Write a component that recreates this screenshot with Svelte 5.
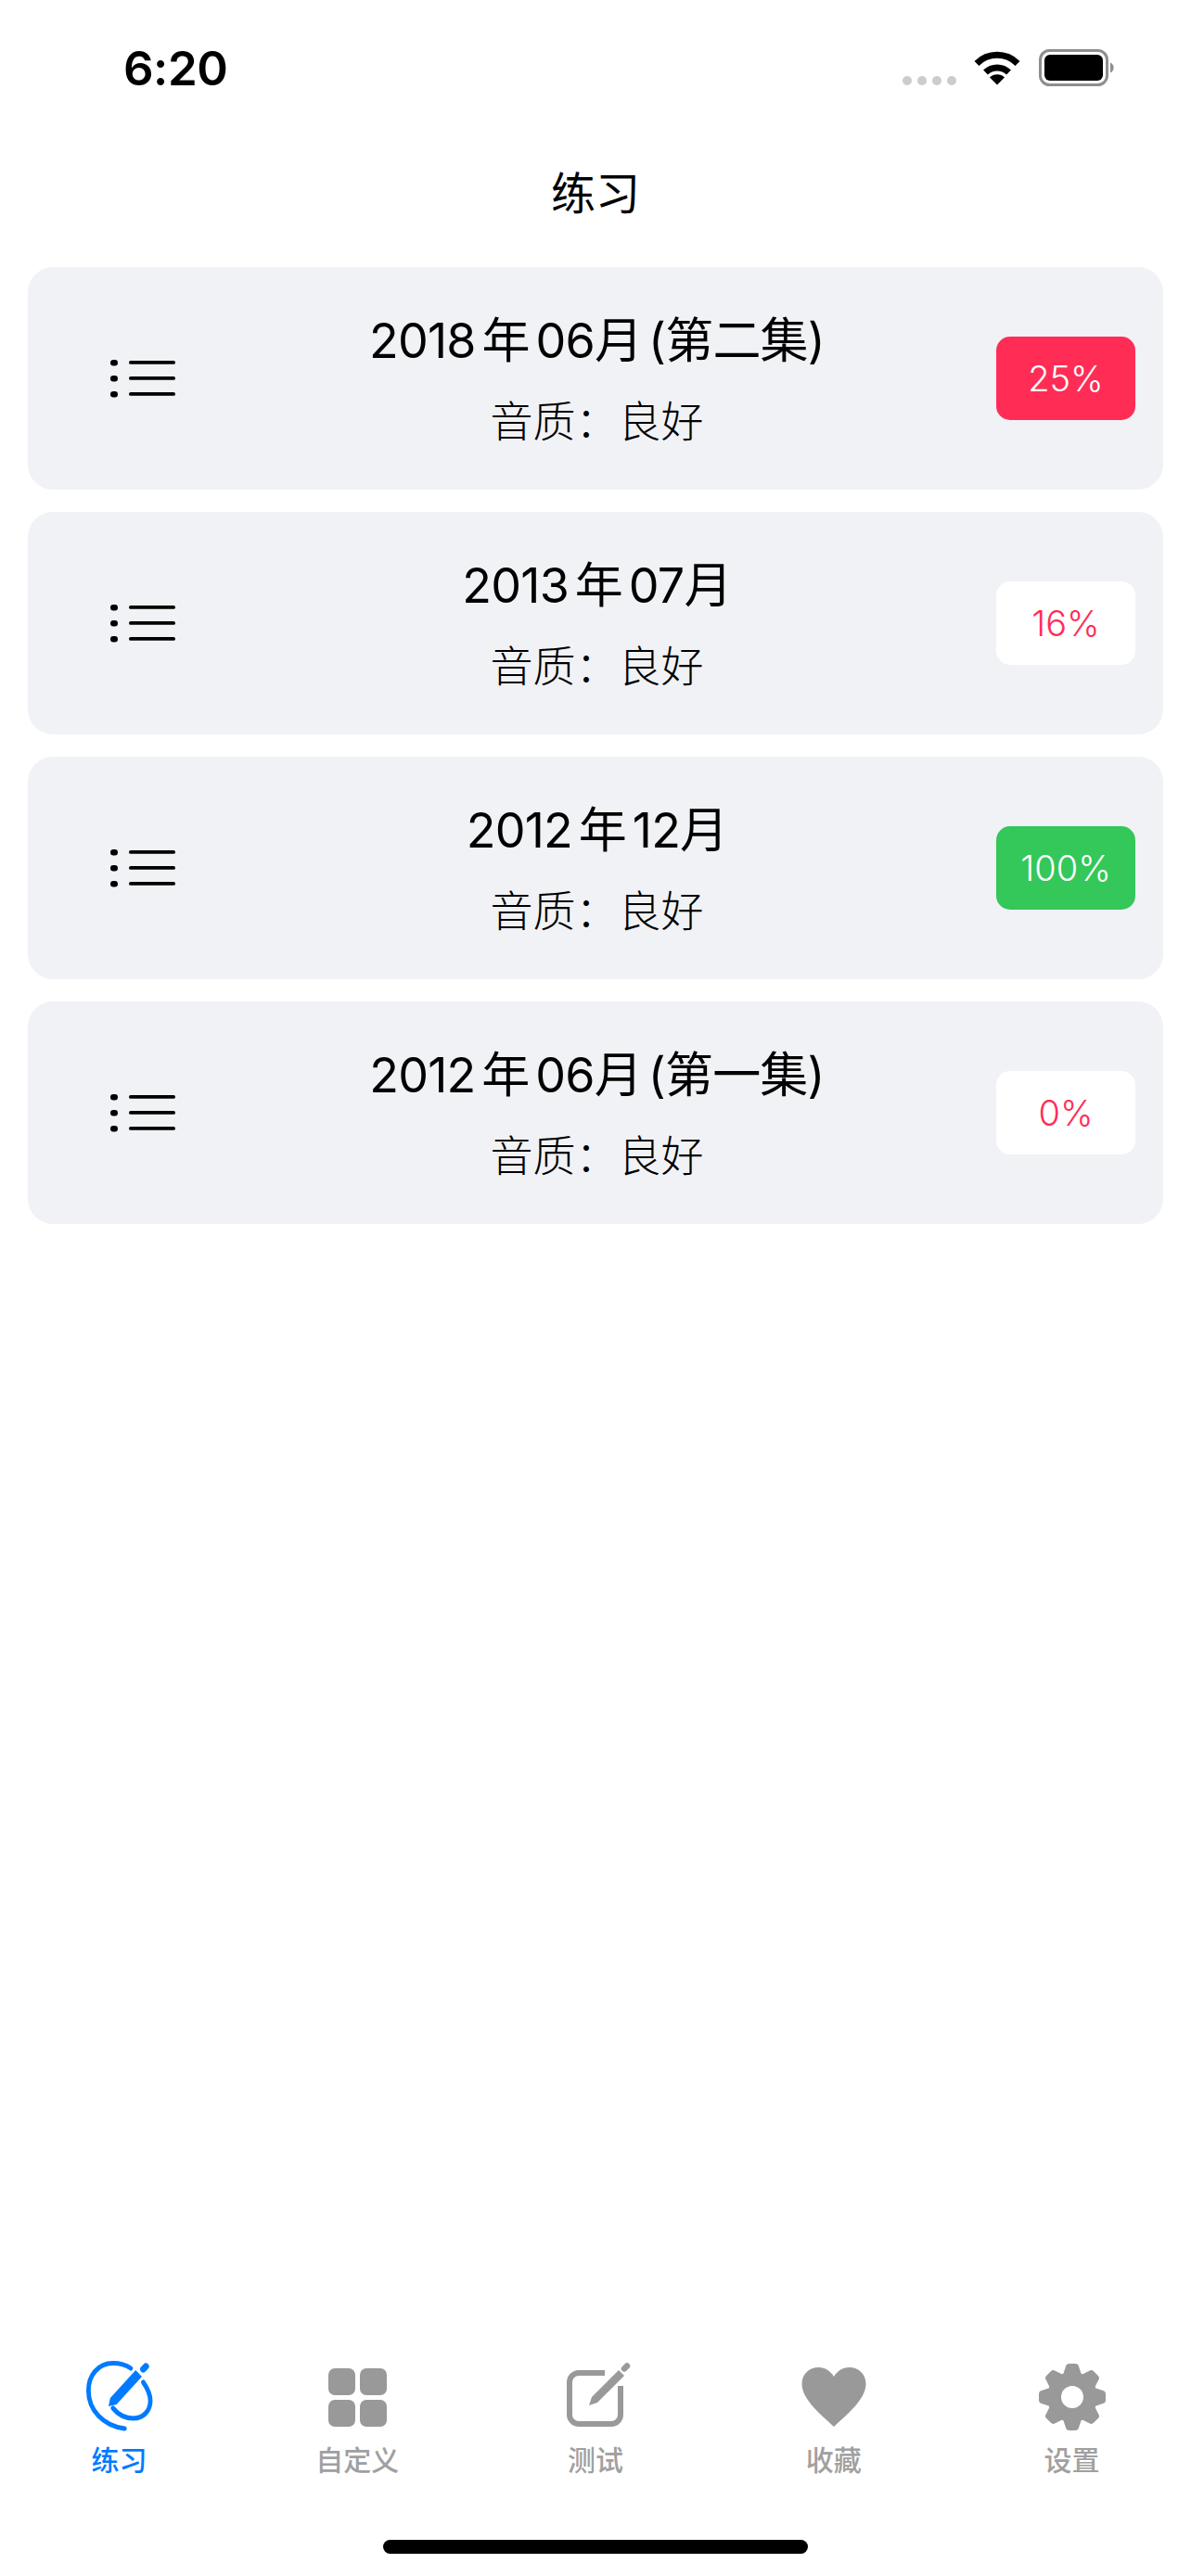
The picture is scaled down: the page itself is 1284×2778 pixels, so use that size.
<script>
  const cards = [
    { title: '2018 年 06月 (第二集)', pct: '25%', kind: 'red' },
    { title: '2013 年 07月', pct: '16%', kind: 'plain' },
    { title: '2012 年 12月', pct: '100%', kind: 'green' },
    { title: '2012 年 06月 (第一集)', pct: '0%', kind: 'plain' }
  ];
  const angles = [0, 45, 90, 135, 180, 225, 270, 315];
</script>

<div class="page">
  <header class="status">
    <span class="time">6:20</span>
    <div class="indicators">
      <div class="dots"><i></i><i></i><i></i><i></i></div>
      <svg class="wifi" width="50" height="38" viewBox="0 0 50 38" aria-hidden="true">
        <path d="M3 14.500A31 31 0 0 1 47 14.500" fill="none" stroke="#000" stroke-width="7" />
        <path d="M12.500 24A18 18 0 0 1 37.500 24" fill="none" stroke="#000" stroke-width="7" />
        <path d="M25 37.500L17 29.500A11.500 11.500 0 0 1 33 29.500Z" fill="#000" />
      </svg>
      <svg class="battery" width="82" height="40" viewBox="0 0 82 40" aria-hidden="true">
        <rect x="1.500" y="1.500" width="72" height="37" rx="10" fill="none" stroke="#8e8e8e" stroke-width="3" />
        <rect x="6" y="6" width="63" height="28" rx="6" fill="#000" />
        <path d="M77 14.500a6 6 0 0 1 0 11Z" fill="#8e8e8e" />
      </svg>
    </div>
  </header>

  <div class="nav">练习</div>

  <main class="list">
    {#each cards as c}
      <section class="card">
        <svg class="list-icon" width="70" height="44" viewBox="0 0 70 44" aria-hidden="true">
          <rect x="0" y="2" width="8" height="6.500" rx="3.250" />
          <rect x="0" y="19" width="8" height="6.500" rx="3.250" />
          <rect x="0" y="36" width="8" height="6.500" rx="3.250" />
          <rect x="20" y="3" width="50" height="3.800" rx="1.900" />
          <rect x="20" y="20" width="50" height="3.800" rx="1.900" />
          <rect x="20" y="37" width="50" height="3.800" rx="1.900" />
        </svg>
        <div class="text">
          <div class="title">{c.title}</div>
          <div class="sub">音质：良好</div>
        </div>
        <div class="badge {c.kind}">{c.pct}</div>
      </section>
    {/each}
  </main>

  <footer class="tabs">
    <div class="tab active">
      <svg width="80" height="80" viewBox="0 0 80 80" aria-hidden="true">
        <g transform="translate(4 0) scale(.96 1)">
          <g fill="none" stroke="#007aff" stroke-width="5" stroke-linecap="round">
            <path d="M51 9C45 5 38 3.500 31 3.500C14 3.500 3.500 17 3.500 33C3.500 54 20 71 44 74" />
            <path d="M65 24C70 31 73 37 73 44C73 55 65 63 54 63C45 63 37 59 31 52" />
          </g>
          <polygon points="26,50 28,41 56.500,11 63.500,18 35,48" fill="#007aff" />
          <path d="M65 10L68 7" stroke="#007aff" stroke-width="7" stroke-linecap="round" />
        </g>
      </svg>
      <span>练习</span>
    </div>
    <div class="tab">
      <div class="icon-slot">
        <div class="grid"><i></i><i></i><i></i><i></i></div>
      </div>
      <span>自定义</span>
    </div>
    <div class="tab">
      <svg width="80" height="80" viewBox="0 0 80 80" aria-hidden="true">
        <g transform="translate(3 0)">
          <path d="M47 14H19a10 10 0 0 0-10 10V59a10 10 0 0 0 10 10H54a10 10 0 0 0 10-10V28" fill="none" stroke="#999" stroke-width="6" />
          <polygon points="30,49 33,40 62,11 68,17 39,46" fill="#999" />
          <path d="M68 9.500L71 6.500" stroke="#999" stroke-width="6.500" stroke-linecap="round" />
        </g>
      </svg>
      <span>测试</span>
    </div>
    <div class="tab">
      <svg width="80" height="80" viewBox="0 0 80 80" aria-hidden="true">
        <path transform="translate(5.500 8)" d="M34.500 64C22 52 0 35 0 18C0 7 8 0 18 0C25 0 31 4 34.500 10C38 4 44 0 51 0C61 0 69 7 69 18C69 35 47 52 34.500 64Z" fill="#999" />
      </svg>
      <span>收藏</span>
    </div>
    <div class="tab">
      <svg width="80" height="80" viewBox="-40 -40 80 80" aria-hidden="true">
        <circle r="27" fill="#999" />
        {#each angles as a}
          <path transform="rotate({a})" d="M-10-24L-7-33Q-6.500-36-3-36H3Q6.500-36 7-33L10-24Z" fill="#999" />
        {/each}
        <circle r="12" fill="#fff" />
      </svg>
      <span>设置</span>
    </div>
  </footer>
  <div class="home-wrap"><div class="home"></div></div>
</div>

<style>
  :global(body) {
    margin: 0;
    background: #fff;
  }
  .page {
    width: 1284px;
    height: 2778px;
    display: flex;
    flex-direction: column;
    font-family: Inter, "Noto Sans CJK SC", sans-serif;
    color: #000;
    background: #fff;
    overflow: hidden;
  }
  .status {
    height: 146px;
    flex: none;
    display: flex;
    align-items: center;
    justify-content: space-between;
    padding: 0 82px 0 133px;
    box-sizing: border-box;
  }
  .time {
    font-size: 51px;
    font-weight: 600;
    letter-spacing: -0.5px;
    line-height: 1;
  }
  .indicators {
    display: flex;
    align-items: flex-end;
    height: 40px;
    margin-top: -1px;
  }
  .dots {
    display: flex;
    gap: 6px;
    margin-right: 19px;
    margin-bottom: 1px;
  }
  .dots i {
    width: 10px;
    height: 10px;
    border-radius: 50%;
    background: #ccc;
  }
  .wifi {
    margin-right: 20px;
    margin-bottom: 1px;
  }
  .nav {
    height: 124px;
    flex: none;
    display: flex;
    align-items: center;
    justify-content: center;
    font-size: 48px;
    font-weight: 400;
    padding-bottom: 6px;
    box-sizing: border-box;
  }
  .list {
    padding: 18px 30px 0;
    display: flex;
    flex-direction: column;
    gap: 24px;
  }
  .card {
    height: 240px;
    background: #f1f2f6;
    border-radius: 27px;
    display: grid;
    grid-template-columns: 1fr auto 1fr;
    align-items: center;
    padding: 0 30px;
    box-sizing: border-box;
  }
  .list-icon {
    fill: #000;
    justify-self: start;
    margin-left: 59px;
  }
  .text {
    display: flex;
    flex-direction: column;
    align-items: center;
    gap: 17px;
    margin-left: 3px;
  }
  .title {
    font-size: 52px;
    line-height: 74px;
    white-space: nowrap;
    word-spacing: -7px;
    letter-spacing: -0.8px;
  }
  .sub {
    font-size: 46px;
    line-height: 64px;
    font-weight: 300;
    white-space: nowrap;
  }
  .badge {
    justify-self: end;
    width: 150px;
    height: 90px;
    border-radius: 15px;
    display: flex;
    align-items: center;
    justify-content: center;
    font-size: 38px;
    font-weight: 300;
  }
  .badge.red {
    background: #ff2d55;
    color: #fff;
  }
  .badge.green {
    background: #34c759;
    color: #fff;
  }
  .badge.plain {
    background: #fff;
    color: #ff2d55;
  }
  .tabs {
    margin-top: auto;
    display: flex;
    height: 122px;
    flex: none;
  }
  .tab {
    flex: 1;
    display: flex;
    flex-direction: column;
    align-items: center;
    color: #a0a0a0;
  }
  .tab.active {
    color: #007aff;
  }
  .tab svg,
  .icon-slot {
    width: 80px;
    height: 80px;
    flex: none;
  }
  .icon-slot {
    display: flex;
    align-items: center;
    justify-content: center;
  }
  .grid {
    display: grid;
    grid-template-columns: 29px 29px;
    grid-auto-rows: 29px;
    gap: 5px;
  }
  .grid i {
    background: #999;
    border-radius: 7px;
  }
  .tab span {
    font-size: 30px;
    font-weight: 500;
    line-height: 36px;
    margin-top: 10px;
  }
  .home-wrap {
    height: 111px;
    flex: none;
    display: flex;
    justify-content: center;
    align-items: flex-start;
    padding-top: 72px;
    box-sizing: border-box;
  }
  .home {
    width: 458px;
    height: 15px;
    border-radius: 8px;
    background: #000;
  }
</style>
